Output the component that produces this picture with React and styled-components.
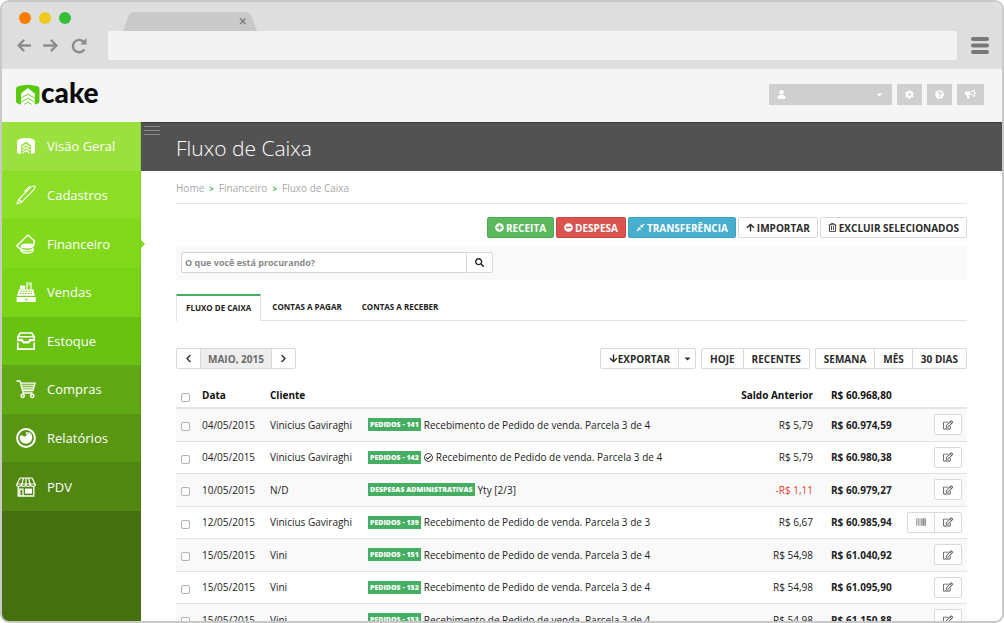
import React from "react";
import styled, { createGlobalStyle, css } from "styled-components";
import {
  FaArrowDown,
  FaArrowUp,
  FaBarcode,
  FaCaretDown,
  FaChevronLeft,
  FaChevronRight,
  FaCog,
  FaCompressAlt,
  FaMinusCircle,
  FaPlusCircle,
  FaQuestionCircle,
  FaRegCheckCircle,
  FaRegEdit,
  FaRegTrashAlt,
  FaSearch,
  FaUser,
} from "react-icons/fa";

const GlobalStyle = createGlobalStyle`
  *, *::before, *::after { box-sizing: border-box; }
  body { margin: 0; background: #fff; }
  body, button, input { font-family: "Open Sans", "Noto Sans", sans-serif; }
  button { margin: 0; padding: 0; border: 0; background: none; cursor: pointer; }
  svg { display: block; flex: none; }
`;

/* Browser window */

const Window = styled.div`
  display: flex;
  flex-direction: column;
  height: 100vh;
  border: 2px solid #c9c9c9;
  border-radius: 9px;
  overflow: hidden;
  background: #fff;
`;

const Chrome = styled.div`
  flex: none;
  padding: 10px 13px 9px 14px;
  background: #dedede;
`;

const TabStrip = styled.div`
  display: flex;
  align-items: flex-start;
  gap: 52px;
  height: 19px;
`;

const Lights = styled.div`
  display: flex;
  gap: 8px;
  padding-left: 3px;
`;

const Light = styled.button`
  width: 12px;
  height: 12px;
  border-radius: 50%;
  background: ${(p) => p.$color};
`;

const AddressRow = styled.div`
  display: flex;
  align-items: center;
`;

const NavButtons = styled.div`
  display: flex;
  gap: 10px;
  width: 92px;
`;

const Address = styled.input`
  flex: 1;
  min-width: 0;
  height: 29px;
  margin-right: 14px;
  padding: 0 8px;
  border: 0;
  border-radius: 3px;
  background: #f3f3f3;
  color: #555;
  font-size: 12px;
`;

/* Application frame */

const Header = styled.header`
  display: flex;
  flex: none;
  align-items: center;
  justify-content: space-between;
  height: 53px;
  padding: 0 18px 3px 14px;
  background: #f5f5f5;
`;

const Logo = styled.a`
  display: flex;
  align-items: center;
  gap: 1px;
  color: #0a0a0a;
  font-family: Lato, sans-serif;
  font-size: 28px;
  font-weight: 900;
  line-height: 30px;
  text-decoration: none;
`;

const LogoText = styled.span`
  padding-bottom: 4px;
`;

const HeaderTools = styled.div`
  display: flex;
  gap: 5px;
`;

const ToolButton = styled.button`
  display: flex;
  align-items: center;
  justify-content: ${(p) => (p.$wide ? "space-between" : "center")};
  width: ${(p) => (p.$wide ? "123px" : "25px")};
  height: 21px;
  padding: 0 ${(p) => (p.$wide ? "8px" : "0")};
  background: #cfcfcf;
  color: #fff;
  font-size: 9px;
  &:last-child {
    width: 27px;
  }
`;

const Body = styled.div`
  display: flex;
  flex: 1;
  min-height: 0;
`;

const Sidebar = styled.nav`
  flex: none;
  width: 139px;
  background: #466f0f;
`;

const Menu = styled.ul`
  display: grid;
  grid-auto-rows: 1fr;
  height: 389px;
  margin: 0;
  padding: 0;
  list-style: none;
`;

const MenuItem = styled.li`
  position: relative;
  background: ${(p) => p.$color};
  box-shadow: inset -1px 0 rgba(0, 0, 0, 0.07);
  ${(p) =>
    p.$active &&
    css`
      &::after {
        content: "";
        position: absolute;
        top: 50%;
        left: 100%;
        margin-top: -4px;
        border: 4px solid transparent;
        border-left-color: ${p.$color};
        border-right: 0;
      }
    `}
`;

const MenuLink = styled.a`
  display: flex;
  align-items: center;
  gap: 11px;
  height: 100%;
  padding-left: 14px;
  color: #fff;
  font-size: 13px;
  text-decoration: none;
`;

const Main = styled.main`
  flex: 1;
  min-width: 0;
  overflow: hidden;
`;

const TitleBar = styled.div`
  display: flex;
  align-items: flex-start;
  gap: 16px;
  height: 49px;
  padding-left: 3px;
  border-top: 1px solid #3c3c3c;
  background: #525252;
`;

const Toggle = styled.button`
  padding-top: 3px;
`;

const Title = styled.h1`
  margin: 0;
  color: #fff;
  font-size: 21px;
  font-weight: 300;
  line-height: 50px;
`;

const Content = styled.div`
  padding: 0 35px;
`;

const Crumbs = styled.nav`
  display: flex;
  align-items: center;
  gap: 5px;
  height: 33px;
  padding-top: 2px;
  border-bottom: 1px solid #e4e4e4;
  color: #45ae62;
  font-size: 8px;
  font-weight: 700;
`;

const Crumb = styled.a`
  color: #a9a9a9;
  font-size: 10px;
  font-weight: 400;
  text-decoration: none;
`;

/* Buttons */

const tones = {
  green: "background: #5cb85c; border-color: #4faa4f; color: #fff;",
  red: "background: #d9534f; border-color: #cd4642; color: #fff;",
  blue: "background: #47aecd; border-color: #3aa2c2; color: #fff;",
  plain: "background: #fff; border-color: #d9d9d9; color: #2b2b2b;",
};

const Button = styled.button`
  display: flex;
  align-items: center;
  justify-content: center;
  gap: ${(p) => (p.$tight ? "0" : "2px")};
  height: 21px;
  padding: 0 8px;
  border: 1px solid;
  border-radius: 2px;
  font-size: 10px;
  font-weight: 700;
  white-space: nowrap;
  ${(p) => tones[p.$tone || "plain"]}
`;

const Actions = styled.div`
  display: flex;
  justify-content: flex-end;
  gap: 2px;
  padding: 13px 0 8px;
  ${Button} {
    padding: 0 7px;
  }
`;

const Group = styled.div`
  display: flex;
  & > * + * {
    margin-left: -1px;
  }
  & > *:not(:first-child) {
    border-top-left-radius: 0;
    border-bottom-left-radius: 0;
  }
  & > *:not(:last-child) {
    border-top-right-radius: 0;
    border-bottom-right-radius: 0;
  }
`;

const SquareButton = styled(Button)`
  width: ${(p) => p.$width};
  padding: 0;
`;

/* Search and tabs */

const SearchBar = styled.form`
  display: flex;
  padding: 6px 5px 7px;
  background: #f9f9f9;
`;

const SearchInput = styled.input`
  width: 286px;
  height: 21px;
  padding: 0 3px;
  border: 1px solid #d4d4d4;
  border-radius: 2px;
  background: #fff;
  color: #444;
  font-size: 9px;
  font-weight: 700;
  &::placeholder {
    color: #8a8a8a;
    opacity: 1;
  }
`;

const Tabs = styled.div`
  display: flex;
  margin-top: 14px;
  border-bottom: 1px solid #e2e2e2;
`;

const Tab = styled.button`
  height: 26px;
  padding: 0 9px 2px;
  color: #222;
  font-size: 8px;
  font-weight: 700;
  white-space: nowrap;
  & + & {
    margin-left: 2px;
  }
  ${(p) =>
    p.$active &&
    css`
      height: 27px;
      margin-bottom: -1px;
      border: solid #e2e2e2;
      border-width: 0 1px;
      border-top: 2px solid #45ae62;
      background: #fff;
    `}
`;

const Toolbar = styled.div`
  display: flex;
  justify-content: space-between;
  margin-top: 27px;
`;

const Filters = styled.div`
  display: flex;
  gap: 5px;
`;

const Month = styled.span`
  display: flex;
  align-items: center;
  justify-content: center;
  width: 72px;
  border: 1px solid #d9d9d9;
  background: #eee;
  color: #6c6c6c;
  font-size: 10px;
  font-weight: 700;
`;

/* Ledger */

const Table = styled.table`
  width: 100%;
  margin-top: 13px;
  border-collapse: collapse;
  table-layout: fixed;
  color: #222;
  font-size: 10px;
  line-height: 16px;
  white-space: nowrap;
`;

const HeadCell = styled.th`
  width: ${(p) => p.$width || "auto"};
  height: 26px;
  padding: 1px ${(p) => (p.$end ? "18px" : "0")} 0 0;
  border-bottom: 2px solid #e4e4e4;
  color: #111;
  font-weight: 700;
  text-align: ${(p) => (p.$end ? "right" : "left")};
`;

const Row = styled.tr`
  height: 33px;
  border-bottom: 1px solid #e2e2e2;
  &:nth-child(odd) {
    background: #f9f9f9;
  }
  &:nth-child(even) {
    height: 32px;
  }
`;

const Cell = styled.td`
  padding: ${(p) => (p.$end ? "0 18px 0 0" : "0")};
  color: ${(p) => (p.$negative ? "#e8402f" : "inherit")};
  font-weight: ${(p) => (p.$strong ? 700 : 400)};
  text-align: ${(p) => (p.$end ? "right" : "left")};
`;

const Check = styled.input`
  display: block;
  appearance: none;
  width: 9px;
  height: 9px;
  margin: 4px 0 0 5px;
  border: 1px solid #b2b2b2;
  border-radius: 2px;
  background: #fff;
  &:checked {
    background: #45ae62;
  }
`;

const Description = styled.div`
  display: flex;
  align-items: center;
  gap: 3px;
`;

const Tag = styled.span`
  padding: 0 2px;
  background: #45ae62;
  color: #fff;
  font-size: 7px;
  font-weight: 800;
  line-height: 13px;
`;

const RowActions = styled(Group)`
  justify-content: flex-end;
  padding-right: 5px;
  svg {
    color: #555;
  }
`;

/* Sidebar drawings */

const Icon = ({ children }) => (
  <svg width="20" height="20" viewBox="0 0 20 20" fill="none" stroke="#fff" strokeWidth="1.5" aria-hidden="true">
    {children}
  </svg>
);

const CakeIcon = () => (
  <Icon>
    <path
      fill="#fff"
      stroke="none"
      d="M1 5.5Q1 4 3 3.2Q10 .8 17 3.2Q19 4 19 5.5V15.5Q19 17.5 15 18V9.5L10 5.5L5 9.5V18Q1 17.5 1 15.5Z"
    />
    <path strokeWidth="1.1" d="M6 11.5L10 8.5L14 11.5M6 14.5L10 11.5L14 14.5M6.5 17L10 14.5L13.5 17" />
  </Icon>
);

const PenIcon = () => (
  <Icon>
    <path
      strokeWidth="1.1"
      strokeLinejoin="round"
      d="M1 19L2.8 14.4L14.6 2.4Q16.6 1 19 1Q19.2 3 17.8 4.6L5.6 17.2ZM2.8 14.4L5.6 17.2M14.2 1L8.4 6.6"
    />
  </Icon>
);

const MoneyIcon = () => (
  <Icon>
    <path strokeWidth="1.4" strokeLinejoin="round" d="M5.5 14.2H3L.8 11.8L12 .9L18.5 7L17.5 11" />
    <path fill="#fff" stroke="none" d="M4.6 12Q5.5 9.6 10.8 9.6T18.9 10.5L17 13.6Q11 15.6 5 13.4Z" />
    <path strokeWidth="1.4" d="M4.8 14.2V16.5Q6 19 11 19T17 16.5V14M5 15.5Q10.5 18 17 15.3" />
  </Icon>
);

const RegisterIcon = () => (
  <Icon>
    <path fill="#fff" stroke="none" d="M4 3.5H9V7H4ZM3 7.2H17.2L19 13.8H1ZM0.6 15H19.8V20H.6Z" />
    <path strokeWidth="1.2" d="M11 7V1H15V7M12.5 3H14" />
    <path stroke="#72cc18" strokeWidth="1" strokeDasharray="1.4 1.3" d="M4.4 9.2H16M3.8 11.5H16.5" />
    <path stroke="#72cc18" strokeWidth="1.2" d="M9 17.5H11.5" />
  </Icon>
);

const DrawerIcon = () => (
  <Icon>
    <path strokeWidth="1.6" strokeLinejoin="round" d="M1.8 8.2V6L4.2 2H15.8L18.2 6V8.2M1.5 5.8H18.5" />
    <path fill="#fff" stroke="none" d="M1 8H6.5L8 10.2H12L13.5 8H19V10.3H14.8L13 12.6H7L5.2 10.3H1Z" />
    <path strokeWidth="1.7" d="M1.8 11.5V18.1H18.2V11.5" />
  </Icon>
);

const CartIcon = () => (
  <Icon>
    <path strokeWidth="1.3" d="M.5 2H4L7.2 14H16.5M5 4.2H19L17 11.5H7" />
    <path strokeWidth="1.1" d="M5.3 6.3H18M6 8.3H17.5M6.5 10H17" />
    <circle cx="6.7" cy="16.8" r="1.6" />
    <circle cx="16.3" cy="16.8" r="1.6" />
  </Icon>
);

const ChartIcon = () => (
  <Icon>
    <circle cx="10" cy="10" r="8.9" strokeWidth="2" />
    <path fill="#fff" stroke="none" d="M3.8 8Q5.5 6.2 8.8 8.8L13.6 4.3A6.3 6.3 0 1 1 3.8 8Z" />
    <path fill="#fff" stroke="none" d="M9.8 4.2H13L10 7Z" />
  </Icon>
);

const StoreIcon = () => (
  <Icon>
    <path
      strokeWidth="1.2"
      strokeLinejoin="round"
      d="M4 1H16L19.2 7.2V8.6Q17 10.4 14.6 8.6Q12.2 10.4 10 8.6Q7.6 10.4 5.4 8.6Q3 10.4 .8 8.6V7.2ZM7.4 1L5.6 8.4M10 1V8.4M12.6 1L14.4 8.4M1.2 7H18.8"
    />
    <path strokeWidth="1.3" d="M2.2 9.5V19H17.8V9.5M3.8 19V12.2H7V19" />
    <path fill="#fff" stroke="none" d="M9 11.6H16V16.6H9Z" />
  </Icon>
);

const LogoMark = () => (
  <svg width="24" height="22" viewBox="0 0 24 22" aria-hidden="true">
    <path
      fill="#5ac80f"
      d="M0 5.5Q0 4 2 3.2Q12 .2 21.5 3.2Q23.5 4 23.5 5.5V18Q23.5 20.5 18.5 21.5V10.5L11.8 5.3L5.2 10.5V21.5Q0 20.5 0 18Z"
    />
    <path fill="#fff" d="M5.2 10.5L11.8 5.3L18.5 10.5V21.5H5.2Z" />
    <path
      fill="none"
      stroke="#6fcf2e"
      strokeWidth="1"
      d="M5.2 15L11.8 11.2L18.5 15M5.2 19L11.8 15.2L18.5 19M8 21.4L11.8 19L15.6 21.4"
    />
  </svg>
);

const Megaphone = () => (
  <svg width="11" height="10" viewBox="0 0 11 10" aria-hidden="true">
    <path fill="#fff" d="M0 3.2Q0 2.6 .6 2.6H5V5.8H3.6Q3.6 7.6 5 8.8Q4 9.8 2.4 9.2Q1.6 7.6 1.8 5.8H.6Q0 5.8 0 5.2Z" />
    <path fill="none" stroke="#fff" strokeWidth="1" d="M4.8 3.1Q7.4 2.6 9.4 .8V7.6Q7.4 5.8 4.8 5.3" />
    <path fill="#fff" d="M9.6 3.2Q10.8 3.4 10.8 4.2T9.6 5.2Z" />
  </svg>
);

const NavArrow = ({ flip }) => (
  <svg width="17" height="15" viewBox="0 0 17 15" fill="none" stroke="#8c8c8c" strokeWidth="2.4" strokeLinecap="round" strokeLinejoin="round">
    <path d={flip ? "M1 7.5H13M8.5 2.5L13.5 7.5L8.5 12.5" : "M14 7.5H3M7.5 2.5L2.5 7.5L7.5 12.5"} />
  </svg>
);

const menu = [
  ["Visão Geral", "#9ae03f", CakeIcon],
  ["Cadastros", "#8cdd26", PenIcon],
  ["Financeiro", "#82d91b", MoneyIcon],
  ["Vendas", "#79d317", RegisterIcon],
  ["Estoque", "#69c111", DrawerIcon],
  ["Compras", "#60a813", CartIcon],
  ["Relatórios", "#589611", ChartIcon],
  ["PDV", "#518710", StoreIcon],
];

const sale = "Recebimento de Pedido de venda. Parcela 3 de ";

const entries = [
  { date: "04/05/2015", client: "Vinicius Gaviraghi", tag: "PEDIDOS - 141", text: sale + "4", value: "R$ 5,79", total: "R$ 60.974,59" },
  { date: "04/05/2015", client: "Vinicius Gaviraghi", tag: "PEDIDOS - 142", text: sale + "4", value: "R$ 5,79", total: "R$ 60.980,38", done: true },
  { date: "10/05/2015", client: "N/D", tag: "DESPESAS ADMINISTRATIVAS", text: "Yty [2/3]", value: "-R$ 1,11", total: "R$ 60.979,27", negative: true },
  { date: "12/05/2015", client: "Vinicius Gaviraghi", tag: "PEDIDOS - 139", text: sale + "3", value: "R$ 6,67", total: "R$ 60.985,94", barcode: true },
  { date: "15/05/2015", client: "Vini", tag: "PEDIDOS - 151", text: sale + "4", value: "R$ 54,98", total: "R$ 61.040,92" },
  { date: "15/05/2015", client: "Vini", tag: "PEDIDOS - 152", text: sale + "4", value: "R$ 54,98", total: "R$ 61.095,90" },
  { date: "15/05/2015", client: "Vini", tag: "PEDIDOS - 153", text: sale + "4", value: "R$ 54,98", total: "R$ 61.150,88" },
];

const BrowserChrome = () => (
  <Chrome>
    <TabStrip>
      <Lights>
        <Light $color="#fb7c00" aria-label="Fechar" />
        <Light $color="#efc91f" aria-label="Minimizar" />
        <Light $color="#34be3a" aria-label="Maximizar" />
      </Lights>
      <svg width="134" height="19" viewBox="0 0 134 19">
        <path fill="#c9c9c9" d="M0 19L5 5Q7 0 12 0H122Q127 0 129 5L134 19Z" />
        <path stroke="#777" strokeWidth="1.2" d="M117 6.5L122.5 12M122.5 6.5L117 12" />
      </svg>
    </TabStrip>
    <AddressRow>
      <NavButtons>
        <button aria-label="Voltar">
          <NavArrow />
        </button>
        <button aria-label="Avançar">
          <NavArrow flip />
        </button>
        <button aria-label="Recarregar">
          <svg width="18" height="18" viewBox="0 0 18 18">
            <path fill="none" stroke="#8c8c8c" strokeWidth="2.4" d="M14.4 12.4A6.2 6.2 0 1 1 13.6 4.8" />
            <path fill="#8c8c8c" d="M16.5 1V7.4H10.2Z" />
          </svg>
        </button>
      </NavButtons>
      <Address type="text" aria-label="Endereço" />
      <button aria-label="Menu do navegador">
        <svg width="18" height="17" viewBox="0 0 18 17" fill="#777">
          <rect width="18" height="4" rx="2" />
          <rect y="6.5" width="18" height="4" rx="2" />
          <rect y="13" width="18" height="4" rx="2" />
        </svg>
      </button>
    </AddressRow>
  </Chrome>
);

export default function App() {
  return (
    <>
      <GlobalStyle />
      <Window>
        <BrowserChrome />
        <Header>
          <Logo href="#">
            <LogoMark />
            <LogoText>cake</LogoText>
          </Logo>
          <HeaderTools>
            <ToolButton $wide aria-label="Conta">
              <FaUser />
              <FaCaretDown />
            </ToolButton>
            <ToolButton aria-label="Configurações">
              <FaCog />
            </ToolButton>
            <ToolButton aria-label="Ajuda">
              <FaQuestionCircle />
            </ToolButton>
            <ToolButton aria-label="Novidades">
              <Megaphone />
            </ToolButton>
          </HeaderTools>
        </Header>
        <Body>
          <Sidebar>
            <Menu>
              {menu.map(([label, color, Drawing]) => (
                <MenuItem key={label} $color={color} $active={label === "Financeiro"}>
                  <MenuLink href="#">
                    <Drawing />
                    {label}
                  </MenuLink>
                </MenuItem>
              ))}
            </Menu>
          </Sidebar>
          <Main>
            <TitleBar>
              <Toggle aria-label="Recolher menu">
                <svg width="16" height="9" viewBox="0 0 16 9" stroke="#8a8a8a">
                  <path d="M0 .5H16M0 4.5H16M0 8.5H16" />
                </svg>
              </Toggle>
              <Title>Fluxo de Caixa</Title>
            </TitleBar>
            <Content>
              <Crumbs aria-label="Trilha">
                <Crumb href="#">Home</Crumb>
                &gt;
                <Crumb href="#">Financeiro</Crumb>
                &gt;
                <Crumb href="#">Fluxo de Caixa</Crumb>
              </Crumbs>
              <Actions>
                <Button $tone="green">
                  <FaPlusCircle size={9} />
                  RECEITA
                </Button>
                <Button $tone="red">
                  <FaMinusCircle size={9} />
                  DESPESA
                </Button>
                <Button $tone="blue">
                  <FaCompressAlt size={9} />
                  TRANSFERÊNCIA
                </Button>
                <Button>
                  <FaArrowUp size={9} />
                  IMPORTAR
                </Button>
                <Button>
                  <FaRegTrashAlt size={9} />
                  EXCLUIR SELECIONADOS
                </Button>
              </Actions>
              <SearchBar onSubmit={(e) => e.preventDefault()}>
                <Group>
                  <SearchInput type="text" aria-label="Busca" placeholder="O que você está procurando?" />
                  <SquareButton $width="27px" aria-label="Buscar">
                    <FaSearch size={9} />
                  </SquareButton>
                </Group>
              </SearchBar>
              <Tabs role="tablist">
                <Tab role="tab" aria-selected="true" $active>
                  FLUXO DE CAIXA
                </Tab>
                <Tab role="tab" aria-selected="false">
                  CONTAS A PAGAR
                </Tab>
                <Tab role="tab" aria-selected="false">
                  CONTAS A RECEBER
                </Tab>
              </Tabs>
              <Toolbar>
                <Group>
                  <SquareButton $width="25px" aria-label="Mês anterior">
                    <FaChevronLeft size={9} />
                  </SquareButton>
                  <Month>MAIO, 2015</Month>
                  <SquareButton $width="25px" aria-label="Próximo mês">
                    <FaChevronRight size={9} />
                  </SquareButton>
                </Group>
                <Filters>
                  <Group>
                    <Button $tight>
                      <FaArrowDown size={9} />
                      EXPORTAR
                    </Button>
                    <SquareButton $width="18px" aria-label="Opções de exportação">
                      <FaCaretDown size={9} />
                    </SquareButton>
                  </Group>
                  <Group>
                    <Button>HOJE</Button>
                    <Button>RECENTES</Button>
                  </Group>
                  <Group>
                    <Button>SEMANA</Button>
                    <Button>MÊS</Button>
                    <Button>30 DIAS</Button>
                  </Group>
                </Filters>
              </Toolbar>
              <Table>
                <thead>
                  <tr>
                    <HeadCell $width="26px">
                      <Check type="checkbox" aria-label="Selecionar todos" />
                    </HeadCell>
                    <HeadCell $width="68px">Data</HeadCell>
                    <HeadCell $width="98px">Cliente</HeadCell>
                    <HeadCell aria-label="Descrição" />
                    <HeadCell $width="100px" $end>
                      Saldo Anterior
                    </HeadCell>
                    <HeadCell $width="72px">R$ 60.968,80</HeadCell>
                    <HeadCell $width="64px" aria-label="Ações" />
                  </tr>
                </thead>
                <tbody>
                  {entries.map((e) => (
                    <Row key={e.total}>
                      <Cell>
                        <Check type="checkbox" aria-label={`Selecionar ${e.tag}`} />
                      </Cell>
                      <Cell>{e.date}</Cell>
                      <Cell>{e.client}</Cell>
                      <Cell>
                        <Description>
                          <Tag>{e.tag}</Tag>
                          {e.done && <FaRegCheckCircle size={9} />}
                          <span>{e.text}</span>
                        </Description>
                      </Cell>
                      <Cell $end $negative={e.negative}>
                        {e.value}
                      </Cell>
                      <Cell $strong>{e.total}</Cell>
                      <Cell>
                        <RowActions>
                          {e.barcode && (
                            <SquareButton $width="28px" aria-label="Boleto">
                              <FaBarcode size={10} />
                            </SquareButton>
                          )}
                          <SquareButton $width="28px" aria-label="Editar">
                            <FaRegEdit size={10} />
                          </SquareButton>
                        </RowActions>
                      </Cell>
                    </Row>
                  ))}
                </tbody>
              </Table>
            </Content>
          </Main>
        </Body>
      </Window>
    </>
  );
}
